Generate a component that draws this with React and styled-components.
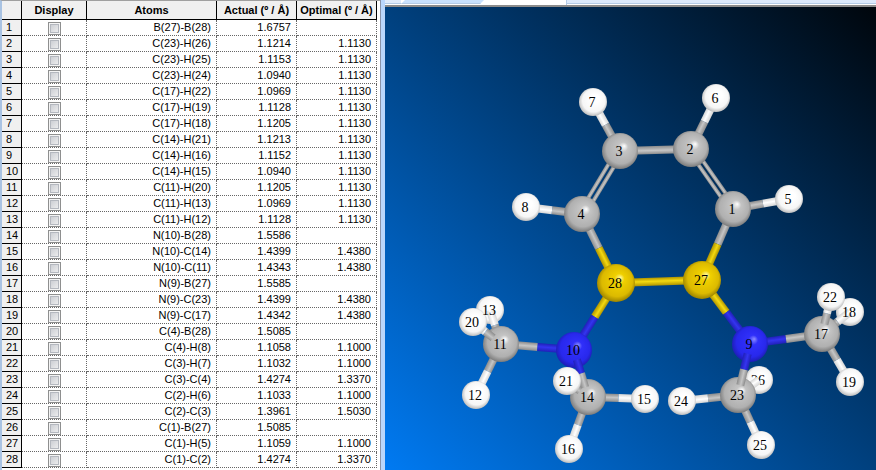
import React from "react";
import styled, { createGlobalStyle } from "styled-components";

const GlobalStyle = createGlobalStyle`
  * {
    box-sizing: border-box;
  }

  body {
    margin: 0;
    background: #fff;
    font-family: "Liberation Sans", Arial, sans-serif;
    font-size: 11px;
    color: #000;
  }
`;

const Window = styled.main`
  display: flex;
  height: 100vh;
  overflow: hidden;
`;

const TablePane = styled.section`
  flex: none;
  padding-right: 3px;
  border-left: 2px solid #a9c3e3;
  border-top: 1px solid #a0a0a0;
  overflow: hidden;
`;

const Splitter = styled.div`
  flex: none;
  width: 5px;
  background: #bad6fb;
  border-left: 1px solid #8a93a8;
`;

const BondTable = styled.table`
  width: 375px;
  table-layout: fixed;
  border-collapse: separate;
  border-spacing: 0;
`;

const Column = styled.col`
  width: ${({ $width }) => $width}px;
`;

const HeadCell = styled.th`
  height: 19px;
  padding: 0;
  background: #f0f0f0;
  border-right: 1px solid #000;
  border-bottom: 1px solid #000;
  line-height: 18px;
  text-align: center;
  white-space: nowrap;
`;

const RowNumber = styled.th`
  height: 16px;
  padding: 0 0 0 4px;
  background: #f0f0f0;
  border-right: 1px solid #000;
  border-bottom: 1px solid #000;
  font-weight: normal;
  line-height: 15px;
  text-align: left;
`;

const Cell = styled.td`
  height: 16px;
  padding: 0 5px 0 0;
  border-right: 1px dotted #666;
  border-bottom: 1px dotted #666;
  line-height: 15px;
  text-align: right;
`;

const CheckCell = styled(Cell)`
  padding: 0;
`;

const Checkbox = styled.input`
  appearance: none;
  display: block;
  width: 13px;
  height: 13px;
  margin: 2px auto 0;
  border: 1px solid #8e8f8f;
  background: linear-gradient(135deg, #c4c7cd, #f4f4f4);
  box-shadow: inset 0 0 0 1px #f4f4f4, inset 0 0 0 2px #b4b8bf;

  &:checked {
    background: #4b6fa8;
  }
`;

const ViewerPane = styled.section`
  flex: 1;
  min-width: 0;
  display: flex;
  flex-direction: column;
`;

const TabStrip = styled.div`
  flex: none;
  display: flex;
  height: 7px;
  background: #fff;
  border-bottom: 2px solid #8c8c8c;
`;

const TabEdge = styled.div`
  flex: ${({ $width }) => ($width ? `none` : `1`)};
  width: ${({ $width }) => $width}px;
  height: 4px;
  background: ${({ $color }) => $color};
  border-bottom: 1px solid #b4cbe6;
  clip-path: ${({ $slanted }) =>
    $slanted ? "polygon(4px 0, 100% 0, calc(100% - 4px) 100%, 0 100%)" : "none"};
`;

const ActiveTab = styled.div`
  flex: none;
  width: 83px;
  border-right: 1px solid #b4cbe6;
`;

const Scene = styled.div`
  flex: 1;
  min-height: 0;
  background: linear-gradient(to top right, #007af2, #00407e 50%, #00060c);
`;

const Drawing = styled.svg`
  display: block;
  width: 100%;
  height: 100%;
`;

const Label = styled.text`
  font-family: "Liberation Serif", "Times New Roman", serif;
  font-size: 14px;
  text-anchor: middle;
`;

const bonds = [
  ["B(27)-B(28)", "1.6757", ""],
  ["C(23)-H(26)", "1.1214", "1.1130"],
  ["C(23)-H(25)", "1.1153", "1.1130"],
  ["C(23)-H(24)", "1.0940", "1.1130"],
  ["C(17)-H(22)", "1.0969", "1.1130"],
  ["C(17)-H(19)", "1.1128", "1.1130"],
  ["C(17)-H(18)", "1.1205", "1.1130"],
  ["C(14)-H(21)", "1.1213", "1.1130"],
  ["C(14)-H(16)", "1.1152", "1.1130"],
  ["C(14)-H(15)", "1.0940", "1.1130"],
  ["C(11)-H(20)", "1.1205", "1.1130"],
  ["C(11)-H(13)", "1.0969", "1.1130"],
  ["C(11)-H(12)", "1.1128", "1.1130"],
  ["N(10)-B(28)", "1.5586", ""],
  ["N(10)-C(14)", "1.4399", "1.4380"],
  ["N(10)-C(11)", "1.4343", "1.4380"],
  ["N(9)-B(27)", "1.5585", ""],
  ["N(9)-C(23)", "1.4399", "1.4380"],
  ["N(9)-C(17)", "1.4342", "1.4380"],
  ["C(4)-B(28)", "1.5085", ""],
  ["C(4)-H(8)", "1.1058", "1.1000"],
  ["C(3)-H(7)", "1.1032", "1.1000"],
  ["C(3)-C(4)", "1.4274", "1.3370"],
  ["C(2)-H(6)", "1.1033", "1.1000"],
  ["C(2)-C(3)", "1.3961", "1.5030"],
  ["C(1)-B(27)", "1.5085", ""],
  ["C(1)-H(5)", "1.1059", "1.1000"],
  ["C(1)-C(2)", "1.4274", "1.3370"],
];

const elements = {
  H: { radius: 14, stops: ["#ffffff", "#ffffff", "#f6f6f6", "#b4b4b4"], bond: ["#d4d4d4", "#ffffff"] },
  C: { radius: 18, stops: ["#ffffff", "#c4c4c4", "#b0b0b0", "#747474"], bond: ["#8c8c8c", "#c6c6c6"] },
  N: { radius: 18, stops: ["#8c8cff", "#3030fa", "#2828ec", "#1c1cac"], bond: ["#2020b8", "#3434f0"] },
  B: { radius: 19, stops: ["#fff8a0", "#f0d000", "#dcba00", "#947c00"], bond: ["#b09400", "#f4da10"] },
};

const atoms = {
  1: ["C", 733, 209],
  2: ["C", 691, 149],
  3: ["C", 620, 151],
  4: ["C", 582, 214],
  5: ["H", 789, 199],
  6: ["H", 716, 98],
  7: ["H", 593, 102],
  8: ["H", 526, 207],
  9: ["N", 750, 344],
  10: ["N", 574, 350],
  11: ["C", 501, 344],
  12: ["H", 476, 395],
  13: ["H", 490, 310],
  14: ["C", 588, 397],
  15: ["H", 645, 399],
  16: ["H", 569, 449],
  17: ["C", 822, 334],
  18: ["H", 850, 312],
  19: ["H", 850, 382],
  20: ["H", 473, 322],
  21: ["H", 567, 381],
  22: ["H", 831, 297],
  23: ["C", 738, 395],
  24: ["H", 682, 401],
  25: ["H", 761, 445],
  26: ["H", 759, 380],
  27: ["B", 702, 280],
  28: ["B", 616, 283],
};

// back to front: a number is an atom, a pair is the bond between two atoms
const drawOrder = [
  [1, 5], [2, 6], [3, 7], [4, 8], [1, 2, "double"], [3, 4, "double"], [2, 3],
  [4, 28], [1, 27], [28, 27], 5, 6, 7, 8, 1, 2, 3, 4,
  [28, 10], [27, 9], 28, 27,
  13, [11, 13], [11, 10], [11, 12], 12, 11, [11, 20, "front"], 20,
  [14, 15], [14, 16], 15, 16, 14, 10, [10, 14, "front"], [14, 21, "front"], 21,
  26, [23, 26], [23, 24], [23, 25], 24, 25, 23,
  [9, 17], 9, [9, 23, "front"],
  18, [17, 18], [17, 19], 19, 17, [17, 22, "front"], 22,
];

// this number sits behind its neighbour, the others lie over everything
const BURIED_LABEL = 26;

const Stick = ({ from, to, kind }) => {
  const [fromType, x1, y1] = atoms[from];
  const [toType, x2, y2] = atoms[to];
  const length = Math.hypot(x2 - x1, y2 - y1);
  const angle = (Math.atan2(y2 - y1, x2 - x1) * 180) / Math.PI;
  const start = kind === "front" ? 10 : 0;
  const end = kind === "front" && toType === "C" ? length - 10 : length;
  // the colour changes halfway between the two surfaces
  const middle =
    fromType === toType
      ? end
      : (length + elements[fromType].radius - elements[toType].radius) / 2;
  const rails = kind === "double" ? [[-5, 4], [1, 4]] : [[-4, 8]];

  return (
    <g transform={`translate(${x1} ${y1}) rotate(${angle})`}>
      {rails.map(([y, height]) => (
        <g key={y}>
          <rect x={start} y={y} width={middle - start} height={height} fill={`url(#stick-${fromType})`} />
          <rect x={middle} y={y} width={end - middle} height={height} fill={`url(#stick-${toType})`} />
        </g>
      ))}
    </g>
  );
};

const AtomLabel = ({ id }) => {
  const [, x, y] = atoms[id];
  return (
    <Label x={x - 1} y={y + 5}>
      {id}
    </Label>
  );
};

const Atom = ({ id }) => {
  const [type, x, y] = atoms[id];
  return (
    <g>
      <circle cx={x} cy={y} r={elements[type].radius} fill={`url(#ball-${type})`} />
      {id === BURIED_LABEL && <AtomLabel id={id} />}
    </g>
  );
};

const Molecule = () => (
  <Drawing viewBox="385 7 491 463" preserveAspectRatio="xMidYMid meet" role="img" aria-label="Molecule">
    <defs>
      {Object.entries(elements).map(([type, { stops, bond }]) => (
        <React.Fragment key={type}>
          <radialGradient id={`ball-${type}`} cx="0.5" cy="0.48" r="0.54" fx="0.62" fy="0.36">
            <stop offset="0" stopColor={stops[0]} />
            <stop offset="0.25" stopColor={stops[1]} />
            <stop offset="0.75" stopColor={stops[2]} />
            <stop offset="1" stopColor={stops[3]} />
          </radialGradient>
          <linearGradient id={`stick-${type}`} x1="0" y1="0" x2="0" y2="1">
            <stop offset="0" stopColor={bond[0]} />
            <stop offset="0.45" stopColor={bond[1]} />
            <stop offset="1" stopColor={bond[0]} />
          </linearGradient>
        </React.Fragment>
      ))}
    </defs>
    {drawOrder.map((item) =>
      Array.isArray(item) ? (
        <Stick key={item.join("-")} from={item[0]} to={item[1]} kind={item[2]} />
      ) : (
        <Atom key={item} id={item} />
      )
    )}
    {Object.keys(atoms)
      .map(Number)
      .filter((id) => id !== BURIED_LABEL)
      .map((id) => (
        <AtomLabel key={id} id={id} />
      ))}
  </Drawing>
);

const Measurements = () => (
  <BondTable>
    <colgroup>
      <Column $width={20} />
      <Column $width={65} />
      <Column $width={130} />
      <Column $width={80} />
      <Column $width={80} />
    </colgroup>
    <thead>
      <tr>
        <HeadCell as="td" />
        <HeadCell scope="col">Display</HeadCell>
        <HeadCell scope="col">Atoms</HeadCell>
        <HeadCell scope="col">Actual (º / Å)</HeadCell>
        <HeadCell scope="col">Optimal (º / Å)</HeadCell>
      </tr>
    </thead>
    <tbody>
      {bonds.map(([name, actual, optimal], index) => (
        <tr key={name}>
          <RowNumber scope="row">{index + 1}</RowNumber>
          <CheckCell>
            <Checkbox type="checkbox" aria-label={`Display ${name}`} />
          </CheckCell>
          <Cell>{name}</Cell>
          <Cell>{actual}</Cell>
          <Cell>{optimal}</Cell>
        </tr>
      ))}
    </tbody>
  </BondTable>
);

const App = () => (
  <>
    <GlobalStyle />
    <Window>
      <TablePane>
        <Measurements />
      </TablePane>
      <Splitter />
      <ViewerPane>
        <TabStrip>
          <TabEdge $width={16} $color="#dfeafa" />
          <TabEdge $width={83} $color="#c8e0fc" $slanted />
          <ActiveTab />
          <TabEdge $color="#dce9fb" />
        </TabStrip>
        <Scene>
          <Molecule />
        </Scene>
      </ViewerPane>
    </Window>
  </>
);

export default App;
